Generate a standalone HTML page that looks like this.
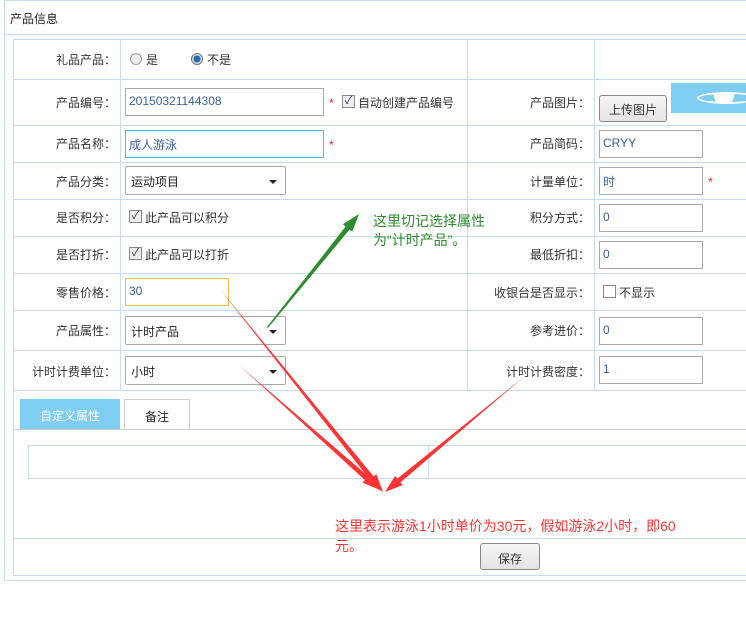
<!DOCTYPE html>
<html><head><meta charset="utf-8"><style>
*{box-sizing:border-box;margin:0;padding:0}
body{width:746px;height:642px;background:#fff;font-family:"Liberation Sans","Noto Sans CJK SC",sans-serif;font-size:12px;color:#333;position:relative;overflow:hidden}
.a{position:absolute}
.hl{position:absolute;height:1px;background:#c6dcef}
.vl{position:absolute;width:1px;background:#c6dcef}
.lab{position:absolute;text-align:right;font-size:12px;color:#333}
.inp{position:absolute;border:1px solid #a9a9a9;background:#fff;height:28px;font-size:12px;color:#3a5f9a;padding:5px 0 0 3px}
.sel{position:absolute;border:1px solid #a9a9a9;border-radius:2px;background:#fff;height:29px;font-size:12px;color:#222;padding:6px 0 0 5px}
.sel:after{content:"";position:absolute;right:8px;top:13px;border-left:4px solid transparent;border-right:4px solid transparent;border-top:4px solid #222}
.cb{position:absolute;width:13px;height:13px;border:1px solid #888;background:#eee;font-size:11px;line-height:11px;text-align:center;color:#334}
.btn{position:absolute;border:1px solid #888;border-radius:3px;background:linear-gradient(#f6f6f6,#e4e4e4);font-size:12px;text-align:center}
.star{position:absolute;color:#e22;font-size:12px}
</style></head><body>
<div class="a" style="left:4px;top:0;width:760px;height:581px;border:1px solid #c6dcef"></div>
<div class="hl" style="left:5px;top:34px;width:741px"></div>
<div class="a" style="left:10px;top:10px;font-size:12px;color:#222">产品信息</div>
<div class="a" style="left:13px;top:39px;width:760px;height:537px;border:1px solid #c6dcef"></div>
<div class="hl" style="left:13px;top:79px;width:733px"></div>
<div class="hl" style="left:13px;top:125px;width:733px"></div>
<div class="hl" style="left:13px;top:162px;width:733px"></div>
<div class="hl" style="left:13px;top:199px;width:733px"></div>
<div class="hl" style="left:13px;top:236px;width:733px"></div>
<div class="hl" style="left:13px;top:273px;width:733px"></div>
<div class="hl" style="left:13px;top:310px;width:733px"></div>
<div class="hl" style="left:13px;top:350px;width:733px"></div>
<div class="hl" style="left:13px;top:390px;width:733px"></div>
<div class="hl" style="left:13px;top:538px;width:733px"></div>
<div class="vl" style="left:120px;top:39px;height:351px"></div>
<div class="vl" style="left:467px;top:39px;height:351px"></div>
<div class="vl" style="left:594px;top:39px;height:351px"></div>
<div class="lab" style="left:13px;width:103px;top:51px">礼品产品：</div>
<div class="lab" style="left:13px;width:103px;top:94px">产品编号：</div>
<div class="lab" style="left:13px;width:103px;top:135px">产品名称：</div>
<div class="lab" style="left:13px;width:103px;top:173px">产品分类：</div>
<div class="lab" style="left:13px;width:103px;top:209px">是否积分：</div>
<div class="lab" style="left:13px;width:103px;top:246px">是否打折：</div>
<div class="lab" style="left:13px;width:103px;top:284px">零售价格：</div>
<div class="lab" style="left:13px;width:103px;top:322px">产品属性：</div>
<div class="lab" style="left:13px;width:103px;top:363px">计时计费单位：</div>
<div class="a" style="left:130px;top:53px;width:12px;height:12px;border-radius:50%;border:1px solid #999;background:#eee"></div>
<div class="a" style="left:146px;top:51px">是</div>
<div class="a" style="left:191px;top:53px;width:12px;height:12px;border-radius:50%;border:1px solid #777;background:radial-gradient(circle,#1a6fb0 0 3px,#ddd 4px)"></div>
<div class="a" style="left:207px;top:51px">不是</div>
<div class="inp" style="left:125px;top:88px;width:199px">20150321144308</div>
<div class="star" style="left:329px;top:96px">*</div>
<div class="cb" style="left:342px;top:95px">✓</div>
<div class="a" style="left:358px;top:94px">自动创建产品编号</div>
<div class="inp" style="left:125px;top:130px;width:199px;border-color:#3cc0ec">成人游泳</div>
<div class="star" style="left:329px;top:138px">*</div>
<div class="sel" style="left:125px;top:166px;width:161px">运动项目</div>
<div class="cb" style="left:129px;top:210px">✓</div>
<div class="a" style="left:145px;top:209px">此产品可以积分</div>
<div class="cb" style="left:129px;top:247px">✓</div>
<div class="a" style="left:145px;top:246px">此产品可以打折</div>
<div class="inp" style="left:125px;top:278px;width:104px;border-color:#f0c040">30</div>
<div class="sel" style="left:125px;top:316px;width:161px">计时产品</div>
<div class="sel" style="left:125px;top:356px;width:161px">小时</div>
<div class="lab" style="left:467px;width:123px;top:94px">产品图片：</div>
<div class="lab" style="left:467px;width:123px;top:135px">产品简码：</div>
<div class="lab" style="left:467px;width:123px;top:173px">计量单位：</div>
<div class="lab" style="left:467px;width:123px;top:209px">积分方式：</div>
<div class="lab" style="left:467px;width:123px;top:246px">最低折扣：</div>
<div class="lab" style="left:467px;width:123px;top:284px">收银台是否显示：</div>
<div class="lab" style="left:467px;width:123px;top:322px">参考进价：</div>
<div class="lab" style="left:467px;width:123px;top:363px">计时计费密度：</div>
<div class="btn" style="left:599px;top:95px;width:68px;height:27px;padding-top:5px">上传图片</div>
<div class="a" style="left:671px;top:83px;width:80px;height:30px;background:#7ecef4"></div>
<div class="a" style="left:697px;top:92px;width:60px;height:12px;border:2px solid #fff;border-radius:50%"></div>
<div class="a" style="left:714px;top:94px;width:20px;height:10px;background:#fff;border-radius:0 0 8px 8px"></div>
<div class="inp" style="left:599px;top:130px;width:104px">CRYY</div>
<div class="inp" style="left:599px;top:167px;width:104px">时</div>
<div class="star" style="left:708px;top:175px">*</div>
<div class="inp" style="left:599px;top:204px;width:104px">0</div>
<div class="inp" style="left:599px;top:241px;width:104px">0</div>
<div class="cb" style="left:603px;top:285px;background:#fff"></div>
<div class="a" style="left:619px;top:284px">不显示</div>
<div class="inp" style="left:599px;top:317px;width:104px">0</div>
<div class="inp" style="left:599px;top:356px;width:104px">1</div>
<div class="a" style="left:20px;top:399px;width:100px;height:30px;background:#7ecef4;color:#fff;text-align:center;padding-top:8px">自定义属性</div>
<div class="a" style="left:124px;top:399px;width:66px;height:31px;border:1px solid #ccc;border-bottom:none;background:#fff;text-align:center;padding-top:8px;color:#222">备注</div>
<div class="a" style="left:13px;top:429px;width:733px;height:1px;background:#ccc"></div>
<div class="a" style="left:28px;top:445px;width:740px;height:34px;border:1px solid #c6dcef"></div>
<div class="vl" style="left:428px;top:445px;height:34px"></div>
<div class="btn" style="left:480px;top:543px;width:60px;height:27px;padding-top:6px">保存</div>
<div class="a" style="left:373px;top:212px;color:#2e8b2e;font-size:14px;line-height:19px">这里切记选择属性<br>为“计时产品”。</div>
<div class="a" style="left:335px;top:516px;color:#f33;font-size:14px;line-height:20px">这里表示游泳1小时单价为30元，假如游泳2小时，即60<br>元。</div>
<svg class="a" style="left:0;top:0" width="746" height="642">
<polygon points="267,327 345.7,226.4 342.9,224.2 359,214 352.3,231.8 349.5,229.6 268,328" fill="#2e8b2e"/>
<polygon points="219,288 373.6,476.4 376.4,474.2 383,492 367,481.8 369.8,479.6" fill="#f33"/>
<polygon points="240,366 368.2,476.2 370.5,473.6 380,490 362.5,482.6 364.8,480" fill="#f33"/>
<polygon points="525,376 400.5,482.4 402.7,485.1 385,492 395.1,475.9 397.3,478.6" fill="#f33"/>
</svg>
</body></html>
